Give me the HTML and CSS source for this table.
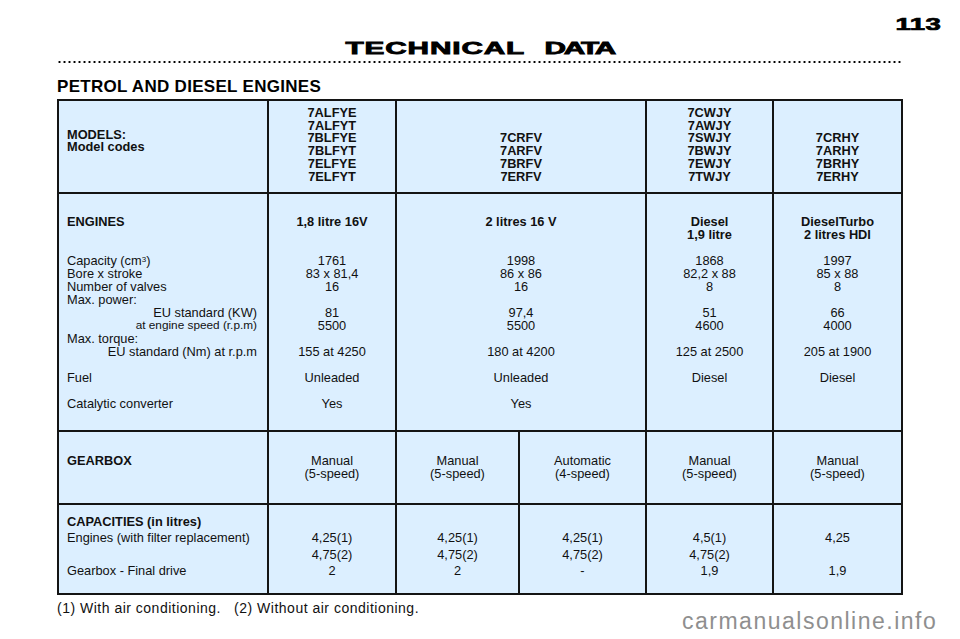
FILE: index.html
```html
<!DOCTYPE html>
<html lang="en">
<head>
<meta charset="utf-8">
<title>Technical data</title>
<link rel="stylesheet" href="styles.css">
</head>
<body>
<div class="page">
  <div class="pagenum"><span class="pn">113</span></div>
  <h1 class="title"><span class="tw"><span class="w1">TECHNICAL</span><span class="w2">DATA</span></span></h1>
  <div class="dots"></div>
  <h2 class="section">PETROL AND DIESEL ENGINES</h2>

  <div class="spec">
    <!-- Models row -->
    <div class="cell lab models-lab">
      <div class="b">MODELS:</div>
      <div class="b">Model codes</div>
    </div>
    <div class="cell codes">
      <div>7ALFYE</div><div>7ALFYT</div><div>7BLFYE</div><div>7BLFYT</div><div>7ELFYE</div><div>7ELFYT</div>
    </div>
    <div class="cell codes span2">
      <div>7CRFV</div><div>7ARFV</div><div>7BRFV</div><div>7ERFV</div>
    </div>
    <div class="cell codes">
      <div>7CWJY</div><div>7AWJY</div><div>7SWJY</div><div>7BWJY</div><div>7EWJY</div><div>7TWJY</div>
    </div>
    <div class="cell codes">
      <div>7CRHY</div><div>7ARHY</div><div>7BRHY</div><div>7ERHY</div>
    </div>

    <!-- Engines row -->
    <div class="cell lab eng">
      <div class="ln b">ENGINES</div>
      <div class="ln"></div>
      <div class="ln"></div>
      <div class="ln">Capacity (cm<span class="sup">3</span>)</div>
      <div class="ln">Bore x stroke</div>
      <div class="ln">Number of valves</div>
      <div class="ln">Max. power:</div>
      <div class="ln rt">EU standard (KW)</div>
      <div class="ln rt sm">at engine speed (r.p.m)</div>
      <div class="ln">Max. torque:</div>
      <div class="ln rt">EU standard (Nm) at r.p.m</div>
      <div class="ln"></div>
      <div class="ln">Fuel</div>
      <div class="ln"></div>
      <div class="ln">Catalytic converter</div>
    </div>
    <div class="cell val eng">
      <div class="ln b">1,8 litre 16V</div>
      <div class="ln"></div>
      <div class="ln"></div>
      <div class="ln">1761</div>
      <div class="ln">83 x 81,4</div>
      <div class="ln">16</div>
      <div class="ln"></div>
      <div class="ln">81</div>
      <div class="ln">5500</div>
      <div class="ln"></div>
      <div class="ln">155 at 4250</div>
      <div class="ln"></div>
      <div class="ln">Unleaded</div>
      <div class="ln"></div>
      <div class="ln">Yes</div>
    </div>
    <div class="cell val eng span2">
      <div class="ln b">2 litres 16 V</div>
      <div class="ln"></div>
      <div class="ln"></div>
      <div class="ln">1998</div>
      <div class="ln">86 x 86</div>
      <div class="ln">16</div>
      <div class="ln"></div>
      <div class="ln">97,4</div>
      <div class="ln">5500</div>
      <div class="ln"></div>
      <div class="ln">180 at 4200</div>
      <div class="ln"></div>
      <div class="ln">Unleaded</div>
      <div class="ln"></div>
      <div class="ln">Yes</div>
    </div>
    <div class="cell val eng">
      <div class="ln b">Diesel</div>
      <div class="ln b">1,9 litre</div>
      <div class="ln"></div>
      <div class="ln">1868</div>
      <div class="ln">82,2 x 88</div>
      <div class="ln">8</div>
      <div class="ln"></div>
      <div class="ln">51</div>
      <div class="ln">4600</div>
      <div class="ln"></div>
      <div class="ln">125 at 2500</div>
      <div class="ln"></div>
      <div class="ln">Diesel</div>
    </div>
    <div class="cell val eng">
      <div class="ln b">DieselTurbo</div>
      <div class="ln b">2 litres HDI</div>
      <div class="ln"></div>
      <div class="ln">1997</div>
      <div class="ln">85 x 88</div>
      <div class="ln">8</div>
      <div class="ln"></div>
      <div class="ln">66</div>
      <div class="ln">4000</div>
      <div class="ln"></div>
      <div class="ln">205 at 1900</div>
      <div class="ln"></div>
      <div class="ln">Diesel</div>
    </div>

    <!-- Gearbox row -->
    <div class="cell lab gear"><div class="ln b">GEARBOX</div></div>
    <div class="cell val gear"><div class="ln">Manual</div><div class="ln">(5-speed)</div></div>
    <div class="cell val gear"><div class="ln">Manual</div><div class="ln">(5-speed)</div></div>
    <div class="cell val gear"><div class="ln">Automatic</div><div class="ln">(4-speed)</div></div>
    <div class="cell val gear"><div class="ln">Manual</div><div class="ln">(5-speed)</div></div>
    <div class="cell val gear"><div class="ln">Manual</div><div class="ln">(5-speed)</div></div>

    <!-- Capacities row -->
    <div class="cell lab cap">
      <div class="cl b">CAPACITIES (in litres)</div>
      <div class="cl">Engines (with filter replacement)</div>
      <div class="cl"></div>
      <div class="cl">Gearbox - Final drive</div>
    </div>
    <div class="cell val cap">
      <div class="cl"></div><div class="cl">4,25(1)</div><div class="cl">4,75(2)</div><div class="cl">2</div>
    </div>
    <div class="cell val cap">
      <div class="cl"></div><div class="cl">4,25(1)</div><div class="cl">4,75(2)</div><div class="cl">2</div>
    </div>
    <div class="cell val cap">
      <div class="cl"></div><div class="cl">4,25(1)</div><div class="cl">4,75(2)</div><div class="cl">-</div>
    </div>
    <div class="cell val cap">
      <div class="cl"></div><div class="cl">4,5(1)</div><div class="cl">4,75(2)</div><div class="cl">1,9</div>
    </div>
    <div class="cell val cap">
      <div class="cl"></div><div class="cl">4,25</div><div class="cl"></div><div class="cl">1,9</div>
    </div>
  </div>

  <p class="note">(1) With air conditioning.&nbsp;&nbsp;&nbsp;(2) Without air conditioning.</p>
  <div class="watermark">carmanualsonline.info</div>
</div>
</body>
</html>
```

FILE: styles.css
```css
html, body {
  margin: 0;
  padding: 0;
  background: #ffffff;
}

.page {
  position: relative;
  width: 960px;
  height: 639px;
  box-sizing: border-box;
  padding: 0 57px;
  font-family: "Liberation Sans", Arial, sans-serif;
  color: #111111;
  overflow: hidden;
}

.pagenum {
  margin: 16px -38px 0 0;
  height: 17px;
  line-height: 17px;
  font-size: 17px;
  font-weight: 700;
  text-align: right;
}

.pn {
  display: inline-block;
  transform: scaleX(1.62);
  transform-origin: right center;
  -webkit-text-stroke: 0.7px #000;
  letter-spacing: 0.3px;
  color: #000;
}

.title {
  margin: 7px 0 0 0;
  height: 17px;
  line-height: 17px;
  font-size: 17px;
  font-weight: 700;
  text-align: center;
  color: #000;
}

.tw {
  display: inline-block;
  transform: scaleX(1.75);
  transform-origin: center center;
  -webkit-text-stroke: 0.8px #000;
}

.w1 {
  letter-spacing: 0.5px;
}

.w2 {
  margin-left: 11px;
  letter-spacing: -1.2px;
}

.dots {
  margin-top: 4px;
  height: 2px;
  width: 846px;
  background-image: radial-gradient(circle at center, #000 0.9px, rgba(0,0,0,0) 1.3px);
  background-size: 5px 2px;
  background-repeat: repeat-x;
}

.section {
  margin: 15px 0 0 0;
  height: 17px;
  line-height: 17px;
  font-size: 17px;
  font-weight: 700;
  letter-spacing: 0.3px;
  color: #000;
}

.spec {
  margin-top: 4px;
  width: 846px;
  box-sizing: border-box;
  display: grid;
  grid-template-columns: 210px 128px 123px 127px 127px 129px;
  grid-template-rows: 93px 238px 73px 90px;
  border-left: 2px solid #141414;
  border-top: 2px solid #141414;
  background: #dcefff;
  font-size: 12.8px;
}

.cell {
  border-right: 2px solid #141414;
  border-bottom: 2px solid #141414;
  box-sizing: border-box;
  min-width: 0;
}

.span2 {
  grid-column: span 2;
}

.b {
  font-weight: 700;
}

.lab {
  padding-left: 8px;
  padding-right: 10px;
  text-align: left;
}

.val {
  text-align: center;
}

.models-lab {
  padding-top: 27.5px;
  line-height: 12.8px;
}

.codes {
  display: flex;
  flex-direction: column;
  justify-content: flex-end;
  padding-bottom: 8.5px;
  line-height: 12.8px;
  text-align: center;
  font-weight: 700;
}

.eng {
  padding-top: 20.5px;
}

.gear {
  padding-top: 21.5px;
}

.cap {
  padding-top: 9px;
}

.ln {
  height: 13px;
  line-height: 13px;
  white-space: nowrap;
}

.cl {
  height: 16.3px;
  line-height: 16.3px;
  white-space: nowrap;
}

.rt {
  text-align: right;
}

.sm {
  font-size: 11.8px;
}

.sup {
  font-size: 8px;
  vertical-align: 3px;
  line-height: 0;
}

.note {
  margin: 5px 0 0 0;
  font-size: 14px;
  line-height: 16px;
  letter-spacing: 0.5px;
  color: #111;
}

.watermark {
  position: absolute;
  left: 682px;
  top: 610px;
  font-size: 23px;
  line-height: 23px;
  letter-spacing: 1.5px;
  color: #8f8f8f;
  white-space: nowrap;
}
```
